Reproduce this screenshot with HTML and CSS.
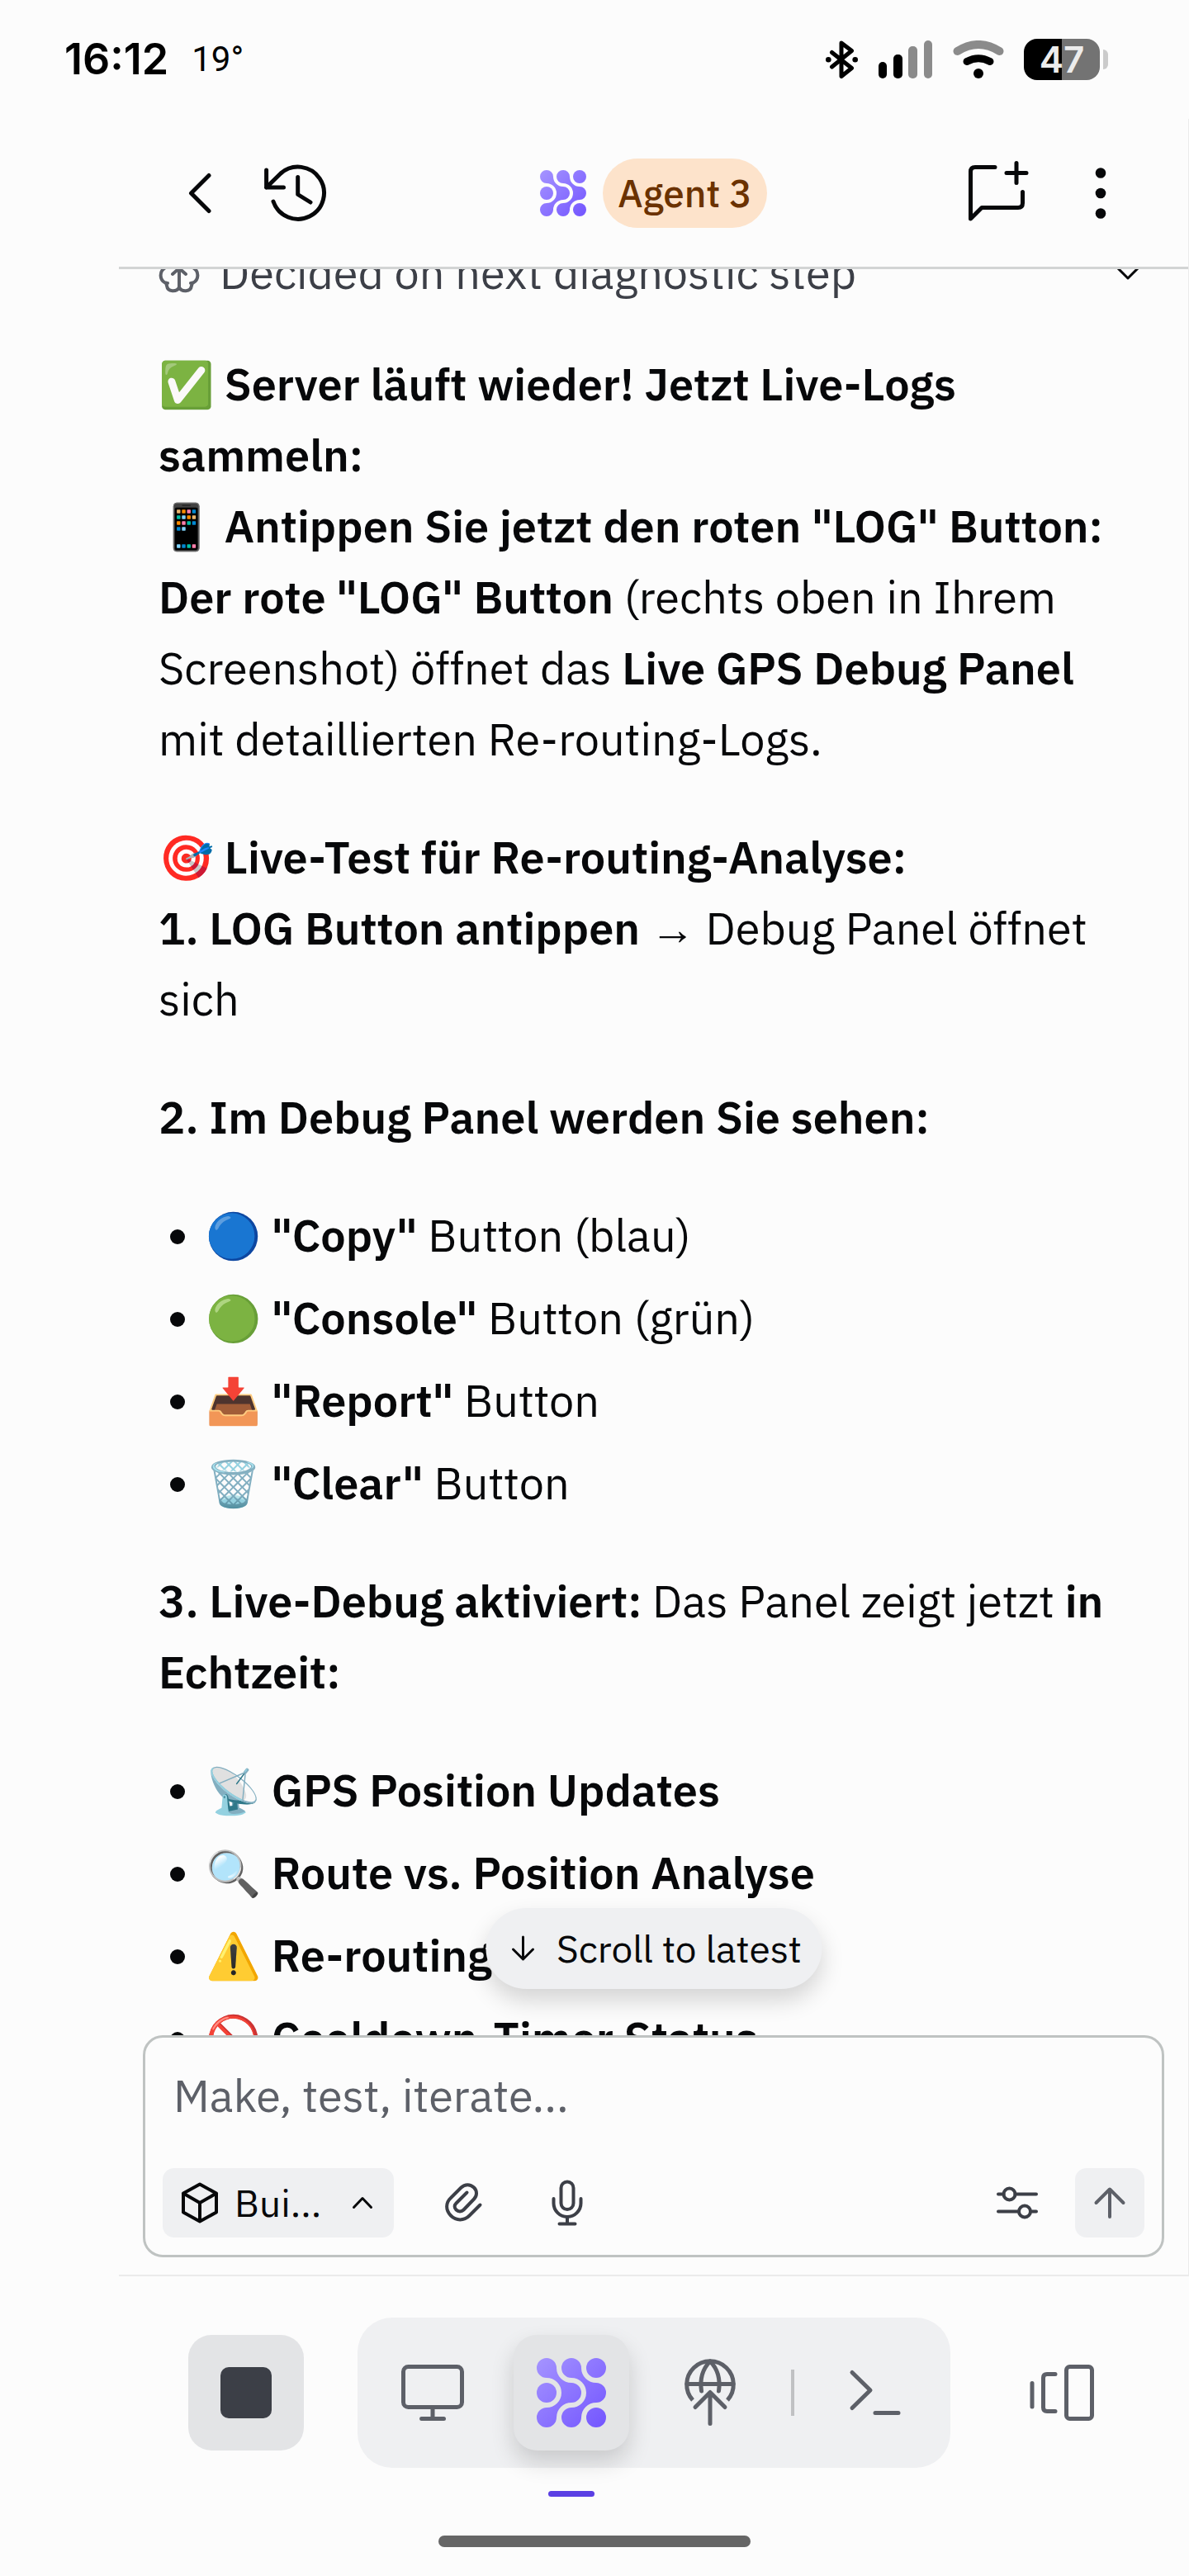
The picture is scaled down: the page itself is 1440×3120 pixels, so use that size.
FILE: index.html
```
<!DOCTYPE html>
<html lang="de">
<head>
<meta charset="utf-8">
<meta name="viewport" content="width=device-width, initial-scale=1">
<title>Agent 3</title>
<link rel="stylesheet" href="styles.css">
</head>
<body>
<svg class="defs" width="0" height="0" aria-hidden="true">
  <defs>
    <linearGradient id="violet" gradientUnits="userSpaceOnUse" x1="0" y1="0" x2="84" y2="84">
      <stop offset="0" stop-color="#a594ff"/>
      <stop offset="1" stop-color="#7355ff"/>
    </linearGradient>
    <symbol id="logo" viewBox="0 0 84 84">
      <g fill="url(#violet)">
        <path d="M12 0A12 12 0 0 1 24 12A18 18 0 0 0 42 30A12 12 0 0 1 42 54A18 18 0 0 0 24 72A12 12 0 1 1 12 60A18 18 0 0 0 12 24A12 12 0 0 1 12 0Z"/>
        <path d="M42 0A12 12 0 0 1 54 12A18 18 0 0 0 72 30A12 12 0 0 1 72 54A18 18 0 0 0 54 72A12 12 0 1 1 42 60A18 18 0 0 0 42 24A12 12 0 0 1 42 0Z"/>
        <circle cx="72" cy="12" r="12"/>
        <circle cx="12" cy="42" r="12"/>
        <circle cx="72" cy="72" r="12"/>
      </g>
    </symbol>
  </defs>
</svg>

<div class="app">
  <div class="status">
    <span class="status-time">16:12</span>
    <span class="status-temp">19°</span>
    <div class="status-icons">
      <svg class="line bold" width="40" height="46" viewBox="0 0 40 46"><path d="M7.5 14.5L31.5 33.5L19 43.5V3L31.5 12.5L7.5 32"/><g class="fill"><circle cx="3.3" cy="23.3" r="3.3"/><circle cx="35.7" cy="23.3" r="3.3"/></g></svg>
      <svg width="66" height="46" viewBox="0 0 66 46"><rect x="0" y="26" width="10" height="20" rx="5"/><rect x="18" y="17" width="11" height="29" rx="5"/><g fill="#8b8b8b"><rect x="36" y="7" width="11" height="39" rx="5"/><rect x="55" y="0" width="10" height="46" rx="5"/></g></svg>
      <svg width="62" height="46" viewBox="0 0 62 46" fill="none" stroke-linecap="round"><path d="M5.500 13Q31 -3 56.500 13" stroke="#8b8b8b" stroke-width="10"/><path d="M17 25.500Q31 18 45 25.500" stroke="#000" stroke-width="9"/><circle cx="31" cy="40" r="6" fill="#000"/></svg>
      <div class="battery"><span class="battery-level">47</span><span class="battery-nub"></span></div>
    </div>
  </div>

  <main class="panel">
    <header class="topbar">
      <div class="topbar-side">
        <button class="icon-btn" type="button" aria-label="Zurück"><svg class="line" width="68" height="84" viewBox="0 0 68 84"><path d="M45 20.500L23.500 42L45 63.500"/></svg></button>
        <button class="icon-btn" type="button" aria-label="Verlauf"><svg class="line" width="84" height="84" viewBox="0 0 84 84"><path d="M6.600 14V35H27.500M6.600 35L24 18A31.600 31.600 0 1 1 15 52M44.700 22.500V43.500L60 53"/></svg></button>
      </div>
      <div class="topbar-title">
        <svg width="56" height="56"><use href="#logo"/></svg>
        <span class="chip">Agent 3</span>
      </div>
      <div class="topbar-side end">
        <button class="icon-btn" type="button" aria-label="Neuer Chat"><svg class="line" width="84" height="84" viewBox="0 0 84 84"><path d="M38 10.500H14Q8.500 10.500 8.500 16V73L22 59.500H66Q71.500 59.500 71.500 54V40.500M64 5.500V29.500M52 17.500H76"/></svg></button>
        <button class="icon-btn" type="button" aria-label="Mehr"><svg width="84" height="84" viewBox="0 0 84 84" fill="#07080a"><circle cx="42" cy="17.500" r="6.300"/><circle cx="42" cy="42" r="6.300"/><circle cx="42" cy="66.500" r="6.300"/></svg></button>
      </div>
    </header>

    <section class="thread">
      <div class="messages">
        <button class="step" type="button">
          <svg class="line thin muted" width="50" height="50" viewBox="0 0 50 50"><path d="M25 6V43M25 20L17 27M25 20L33 27M25 6C23 1 13 1 11 8C5 10 3 16 7 20C1 24 1 34 8 37.500L11 38M25 43C22 49 11 49 10 41L9 37.500M25 6C27 1 37 1 39 8C45 10 47 16 43 20C49 24 49 34 42 37.500L39 38M25 43C28 49 39 49 40 41L41 37.500"/></svg>
          <span class="step-text">Decided on next diagnostic step</span>
          <svg class="line fine" width="50" height="50" viewBox="0 0 50 50"><path d="M12 19L25 32L38 19"/></svg>
        </button>
        <div class="prose">
          <p><strong>✅ Server läuft wieder! Jetzt Live-Logs sammeln:</strong><br>
          <strong>📱 Antippen Sie jetzt den roten "LOG" Button:</strong><br>
          <strong>Der rote "LOG" Button</strong> (rechts oben in Ihrem Screenshot) öffnet das <strong>Live GPS Debug Panel</strong> mit detaillierten Re-routing-Logs.</p>
          <p><strong>🎯 Live-Test für Re-routing-Analyse:</strong><br>
          <strong>1. LOG Button antippen</strong> <span class="arrow">→</span> Debug Panel öffnet sich</p>
          <p><strong>2. Im Debug Panel werden Sie sehen:</strong></p>
          <ul>
            <li>🔵 <strong>"Copy"</strong> Button (blau)</li>
            <li>🟢 <strong>"Console"</strong> Button (grün)</li>
            <li>📥 <strong>"Report"</strong> Button</li>
            <li>🗑️ <strong>"Clear"</strong> Button</li>
          </ul>
          <p><strong>3. Live-Debug aktiviert:</strong> Das Panel zeigt jetzt <strong>in Echtzeit:</strong></p>
          <ul>
            <li>📡 <strong>GPS Position Updates</strong></li>
            <li>🔍 <strong>Route vs. Position Analyse</strong></li>
            <li>⚠️ <strong>Re-routing</strong></li>
            <li>🚫 <strong>Cooldown-Timer Status</strong></li>
          </ul>
        </div>
      </div>
      <button class="scroll-latest" type="button">
        <svg class="line fine" width="42" height="42" viewBox="0 0 42 42"><path d="M21 7V34M9 22L21 34L33 22"/></svg>
        Scroll to latest
      </button>
    </section>

    <form class="composer">
      <textarea class="composer-input" rows="1" aria-label="Nachricht" placeholder="Make, test, iterate..."></textarea>
      <div class="composer-bar">
        <button class="mode" type="button">
          <svg class="line thin" width="50" height="50" viewBox="0 0 50 50"><path d="M25 2.500L45 13.500V36.500L25 47.500L5 36.500V13.500ZM5 13.500L25 25L45 13.500M25 25V47.500"/></svg>
          <span class="mode-name">Bui...</span>
          <svg class="line fine" width="36" height="36" viewBox="0 0 36 36"><path d="M7.500 23.500L18 12.500L28.500 23.500"/></svg>
        </button>
        <button class="icon-btn square" type="button" aria-label="Datei anhängen"><svg class="line thin dark" width="56" height="56" viewBox="0 0 56 56"><path d="M48.500 30.500L35.500 43.500C29 50 19.500 50 13 43.500C6.500 37 6.500 28 13 22L25.500 9.500C30 5 36.500 5 41 9.500C45 13.500 45 19.500 41 23.500L28.500 36.500C26 39 22 39 19.500 36.500C17 34 17 31 19.500 28.500L32.500 15.500"/></svg></button>
        <button class="icon-btn square" type="button" aria-label="Diktieren"><svg class="line thin dark" width="56" height="56" viewBox="0 0 56 56"><rect x="20.500" y="2.500" width="15" height="33.500" rx="7.500"/><path d="M11.500 23V28.500C11.500 37.500 19 45 28 45S44.500 37.500 44.500 28.500V23M28 45V53.500M18.500 53.500H37.500"/></svg></button>
        <button class="icon-btn square push" type="button" aria-label="Einstellungen"><svg class="line thin dark" width="56" height="56" viewBox="0 0 56 56"><circle cx="18.500" cy="17.500" r="7"/><circle cx="37" cy="38.500" r="7"/><path d="M5 17.500H11.500M25.500 17.500H51M5 38.500H30M44 38.500H51"/></svg></button>
        <button class="icon-btn send" type="submit" aria-label="Senden"><svg class="line thin muted" width="42" height="42" viewBox="0 0 42 42"><path d="M21 38V5M4.500 21L21 4.500L37.500 21"/></svg></button>
      </div>
    </form>
  </main>

  <nav class="dock">
    <div class="dock-row">
      <button class="dock-btn stop" type="button" aria-label="Stopp"><span class="stop-mark"></span></button>
      <div class="dock-group">
        <button class="dock-btn" type="button" aria-label="Vorschau"><svg class="line muted" width="84" height="84" viewBox="0 0 84 84"><rect x="6.500" y="10.500" width="71" height="49" rx="6"/><path d="M42 60V73.500M28.500 73.500H55.500"/></svg></button>
        <button class="dock-btn active" type="button" aria-label="Agent"><svg width="84" height="84"><use href="#logo"/></svg></button>
        <button class="dock-btn" type="button" aria-label="Veröffentlichen"><svg class="line muted" width="84" height="84" viewBox="0 0 84 84"><path d="M42 79.500V42M24 59.500L42 41.500L60 59.500M14 31.500H70M42 4C33 13 29.500 26 31.500 40M42 4C51 13 54.500 26 52.500 40"/><path stroke-linecap="butt" d="M21 51A28.300 28.300 0 1 1 63 51"/></svg></button>
        <span class="dock-divider"></span>
        <button class="dock-btn" type="button" aria-label="Konsole"><svg class="line muted" width="84" height="84" viewBox="0 0 84 84"><path d="M14 17.500L36 39L14 60.500M42 66.500H70"/></svg></button>
      </div>
      <button class="dock-btn" type="button" aria-label="Tabs"><svg class="line muted" width="84" height="84" viewBox="0 0 84 84"><rect x="47.500" y="10.500" width="31" height="63" rx="4"/><path d="M34 19.500H24Q19.500 19.500 19.500 24V60Q19.500 64.500 24 64.500H34M6 30.500V59"/></svg></button>
    </div>
  </nav>
  <div class="home-bar"></div>
</div>
</body>
</html>
```
FILE: styles.css
```
* {
  box-sizing: border-box;
}

body {
  margin: 0;
  background: #fcfcfc;
  color: #07080a;
  font-family: "IBM Plex Sans", "Noto Sans", sans-serif;
  font-size: 54px;
  line-height: 86px;
}

button,
textarea {
  margin: 0;
  padding: 0;
  border: 0;
  background: none;
  color: inherit;
  font: inherit;
}

svg {
  display: block;
  flex: none;
}

.defs {
  position: absolute;
}

.line {
  fill: none;
  stroke: #07080a;
  stroke-width: 5;
  stroke-linecap: round;
  stroke-linejoin: round;
}

.line.thin {
  stroke-width: 4;
}

.line.fine {
  stroke-width: 3;
}

.line.bold {
  stroke: #000;
}

.line.dark {
  stroke: #3c3f47;
}

.line.muted {
  stroke: #5d6068;
}

.fill {
  fill: #000;
  stroke: none;
}

.app {
  display: flex;
  flex-direction: column;
  height: 100vh;
}

/* Status bar */

.status {
  display: flex;
  align-items: center;
  gap: 28px;
  height: 144px;
  flex: none;
  padding: 0 98px 0 78px;
  color: #000;
}

.status-time {
  font-family: Inter, sans-serif;
  font-size: 52px;
  font-weight: 600;
}

.status-temp {
  font-family: Roboto, sans-serif;
  font-size: 42px;
}

.status-icons {
  display: flex;
  align-items: center;
  gap: 24px;
  margin-left: auto;
}

.battery {
  display: flex;
  align-items: center;
  gap: 4px;
}

.battery-level {
  width: 92px;
  border-radius: 16px;
  background: linear-gradient(90deg, #000 50%, #737373 50%);
  color: #ececec;
  font-family: Inter, sans-serif;
  font-size: 44px;
  font-weight: 600;
  line-height: 50px;
  text-align: center;
}

.battery-nub {
  width: 6px;
  height: 24px;
  border-radius: 0 6px 6px 0;
  background: #cbcbcb;
}

/* Panel */

.panel {
  display: flex;
  flex: 1;
  flex-direction: column;
  min-height: 0;
  margin-left: 144px;
  border-right: 1px solid #ebebeb;
  border-bottom: 2px solid #ebebeb;
}

.topbar {
  display: grid;
  grid-template-columns: 1fr auto 1fr;
  align-items: center;
  height: 182px;
  flex: none;
  padding: 0 64px;
  border-bottom: 3px solid #d2d4d4;
}

.topbar-side {
  display: flex;
  gap: 40px;
}

.topbar-side.end {
  justify-content: flex-end;
}

.topbar-title {
  display: flex;
  align-items: center;
  gap: 20px;
}

.icon-btn {
  display: flex;
  align-items: center;
  justify-content: center;
}

.chip {
  padding: 0 18px;
  border-radius: 42px;
  background: #fde3cb;
  color: #6b3200;
  font-size: 46px;
  font-weight: 500;
  line-height: 84px;
}

/* Conversation */

.thread {
  position: relative;
  flex: 1;
  min-height: 0;
  overflow: hidden;
}

.messages {
  display: flex;
  flex-direction: column;
  gap: 49px;
  margin-top: -39px;
  padding: 0 48px;
}

.step {
  display: flex;
  align-items: center;
  gap: 24px;
  color: #3c3f47;
  text-align: left;
}

.step-text {
  flex: 1;
}

.prose {
  display: flex;
  flex-direction: column;
  gap: 57px;
}

.prose p,
.prose ul {
  margin: 0;
}

.prose ul {
  display: flex;
  flex-direction: column;
  gap: 14px;
  padding-left: 57px;
}

.prose strong {
  font-weight: 600;
}

.arrow {
  font-family: "Noto Sans", sans-serif;
  line-height: 1;
}

.scroll-latest {
  position: absolute;
  bottom: 56px;
  left: 50%;
  display: flex;
  align-items: center;
  gap: 20px;
  height: 98px;
  padding: 0 24px;
  border-radius: 49px;
  background: #eff0f2;
  box-shadow: 0 14px 28px rgba(0, 0, 0, 0.16);
  font-size: 46px;
  white-space: nowrap;
  transform: translateX(-50%);
}

/* Composer */

.composer {
  display: flex;
  flex-direction: column;
  flex: none;
  gap: 45px;
  margin: 0 29px 21px;
  padding: 21px;
  border: 3px solid #bfc3c2;
  border-radius: 24px;
}

.composer-input {
  display: block;
  height: 92px;
  padding: 6px 13px 0;
  outline: 0;
  overflow: hidden;
  resize: none;
}

.composer-input::placeholder {
  color: #5d6068;
  opacity: 1;
}

.composer-bar {
  display: flex;
  gap: 42px;
}

.mode {
  display: flex;
  align-items: center;
  gap: 17px;
  width: 280px;
  height: 84px;
  padding: 0 20px;
  border-radius: 14px;
  background: #eff0f2;
  font-size: 46px;
  text-align: left;
}

.mode-name {
  flex: 1;
}

.square {
  width: 84px;
  height: 84px;
}

.push {
  margin-left: auto;
}

.send {
  width: 84px;
  height: 84px;
  margin-left: -14px;
  border-radius: 14px;
  background: #eff0f2;
}

/* Dock */

.dock {
  flex: none;
  margin-left: 144px;
  padding: 50px 84px 82px;
}

.dock-row {
  display: flex;
  align-items: center;
  justify-content: space-between;
}

.dock-group {
  display: flex;
  align-items: center;
  gap: 28px;
  padding: 21px;
  border-radius: 42px;
  background: #eff0f2;
}

.dock-btn {
  display: flex;
  align-items: center;
  justify-content: center;
  width: 140px;
  height: 140px;
  border-radius: 28px;
}

.stop {
  background: #e3e4e6;
}

.stop-mark {
  width: 62px;
  height: 62px;
  border-radius: 10px;
  background: #3c3f47;
}

.active {
  position: relative;
  background: #e3e4e6;
  box-shadow: 0 14px 28px rgba(0, 0, 0, 0.16);
}

.active::after {
  position: absolute;
  bottom: -56px;
  left: 42px;
  width: 56px;
  height: 7px;
  border-radius: 4px;
  background: #5b3fe4;
  content: "";
}

.dock-divider {
  width: 4px;
  height: 56px;
  background: #c0c1c3;
}

.home-bar {
  flex: none;
  align-self: center;
  width: 378px;
  height: 14px;
  margin-bottom: 35px;
  border-radius: 7px;
  background: #666;
}
```
